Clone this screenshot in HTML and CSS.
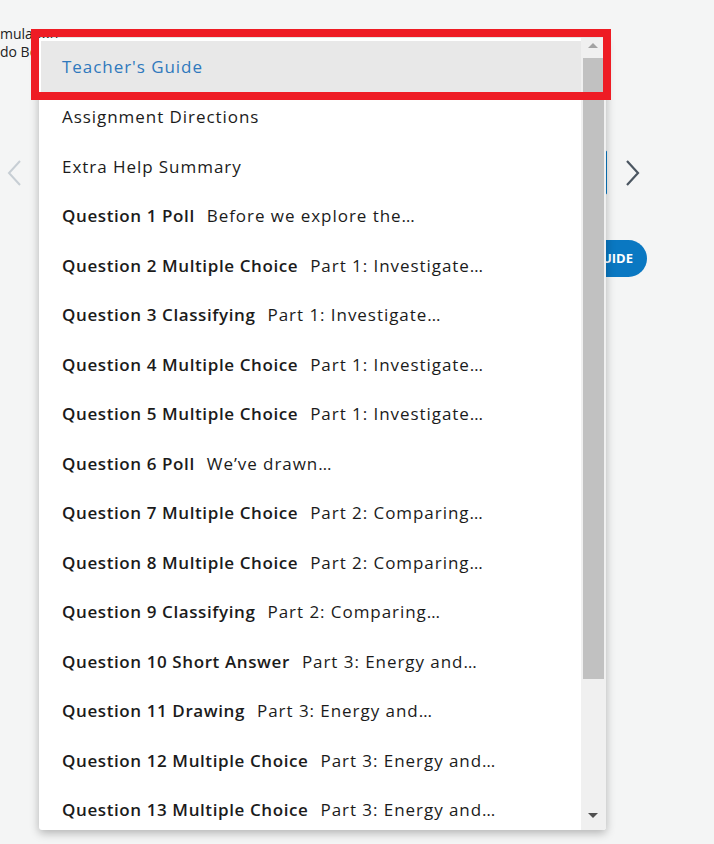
FILE: index.html
```html
<!DOCTYPE html>
<html lang="en">
<head>
<meta charset="utf-8">
<title>Menu</title>
<link rel="stylesheet" href="styles.css">
</head>
<body>
<div class="page">
  <div class="crumbs">
    <div>mulation</div>
    <div>do Box</div>
  </div>
  <div class="navrow">
    <svg class="chev" width="14" height="26" viewBox="0 0 14 26"><path d="M13 1 L2 13 L13 25" fill="none" stroke="#c7ced4" stroke-width="2"/></svg>
    <div class="selectbox"></div>
    <svg class="chev chev-right" width="14" height="26" viewBox="0 0 14 26"><path d="M1 1 L12 13 L1 25" fill="none" stroke="#4b5661" stroke-width="2.2"/></svg>
  </div>
  <div class="pillrow">
    <div class="pill">TEACHER GUIDE</div>
  </div>

  <div class="panel">
    <ul class="list">
      <li class="item active">Teacher's Guide</li>
      <li class="item">Assignment Directions</li>
      <li class="item">Extra Help Summary</li>
      <li class="item"><b>Question 1 Poll</b><span>Before we explore the…</span></li>
      <li class="item"><b>Question 2 Multiple Choice</b><span>Part 1: Investigate…</span></li>
      <li class="item"><b>Question 3 Classifying</b><span>Part 1: Investigate…</span></li>
      <li class="item"><b>Question 4 Multiple Choice</b><span>Part 1: Investigate…</span></li>
      <li class="item"><b>Question 5 Multiple Choice</b><span>Part 1: Investigate…</span></li>
      <li class="item"><b>Question 6 Poll</b><span>We’ve drawn…</span></li>
      <li class="item"><b>Question 7 Multiple Choice</b><span>Part 2: Comparing…</span></li>
      <li class="item"><b>Question 8 Multiple Choice</b><span>Part 2: Comparing…</span></li>
      <li class="item"><b>Question 9 Classifying</b><span>Part 2: Comparing…</span></li>
      <li class="item"><b>Question 10 Short Answer</b><span>Part 3: Energy and…</span></li>
      <li class="item"><b>Question 11 Drawing</b><span>Part 3: Energy and…</span></li>
      <li class="item"><b>Question 12 Multiple Choice</b><span>Part 3: Energy and…</span></li>
      <li class="item"><b>Question 13 Multiple Choice</b><span>Part 3: Energy and…</span></li>
    </ul>
    <div class="scrollbar">
      <div class="arrow arrow-up"></div>
      <div class="thumb"></div>
      <div class="arrow arrow-down"></div>
    </div>
  </div>
  <div class="highlight"></div>
</div>
</body>
</html>
```

FILE: styles.css
```css
html, body {
  margin: 0;
  padding: 0;
}
body {
  background: #f4f5f5;
  font-family: "Open Sans", "Noto Sans", sans-serif;
  color: #1b1b1b;
  width: 714px;
  height: 844px;
  overflow: hidden;
}
.page {
  position: relative;
  width: 714px;
  height: 844px;
}
.crumbs {
  padding-top: 25px;
  font-size: 14px;
  line-height: 18px;
  color: #222;
}
.navrow {
  margin-top: 89px;
  height: 45px;
  display: flex;
  align-items: center;
  padding-left: 7px;
}
.selectbox {
  margin-left: 19px;
  width: 565px;
  height: 43px;
  border: 1px solid #0a78c2;
  border-radius: 2px;
  background: #fff;
}
.chev-right {
  margin-left: 19px;
}
.pillrow {
  margin-top: 45px;
  display: flex;
  justify-content: flex-end;
  padding-right: 67px;
}
.pill {
  height: 37px;
  line-height: 37px;
  padding: 0 14px 0 20px;
  border-radius: 19px;
  background: #0a78c2;
  color: #fff;
  font-weight: 700;
  font-size: 13px;
}
.panel {
  position: absolute;
  left: 39px;
  top: 38px;
  width: 567px;
  height: 792px;
  background: #fff;
  box-shadow: 0 3px 10px rgba(0, 0, 0, 0.28);
  display: flex;
  overflow: hidden;
  border-radius: 0 0 3px 3px;
}
.list {
  flex: 1;
  list-style: none;
  margin: 0;
  padding: 3px 0 0 2px;
  overflow: hidden;
}
.item {
  height: 49.5px;
  display: flex;
  align-items: center;
  gap: 12px;
  padding-left: 21px;
  font-size: 17px;
  letter-spacing: 0.95px;
  white-space: nowrap;
  color: #1b1b1b;
}
.item b {
  font-weight: 600;
  letter-spacing: 0.6px;
}
.item.active {
  background: #e8e8e8;
  color: #2f79bd;
  height: 51px;
}
.scrollbar {
  width: 25px;
  background: #f0f0f0;
  position: relative;
}
.thumb {
  position: absolute;
  left: 2px;
  right: 2px;
  top: 20px;
  height: 621px;
  background: #c1c1c1;
}
.arrow {
  position: absolute;
  left: 7px;
  width: 0;
  height: 0;
  border-left: 5px solid transparent;
  border-right: 5px solid transparent;
}
.arrow-up {
  top: 5px;
  border-bottom: 5px solid #a3a3a3;
}
.arrow-down {
  bottom: 12px;
  border-top: 5px solid #505050;
}
.highlight {
  position: absolute;
  left: 31px;
  top: 29px;
  width: 580px;
  height: 71px;
  border: 8px solid #ee1c24;
  box-sizing: border-box;
}
```
